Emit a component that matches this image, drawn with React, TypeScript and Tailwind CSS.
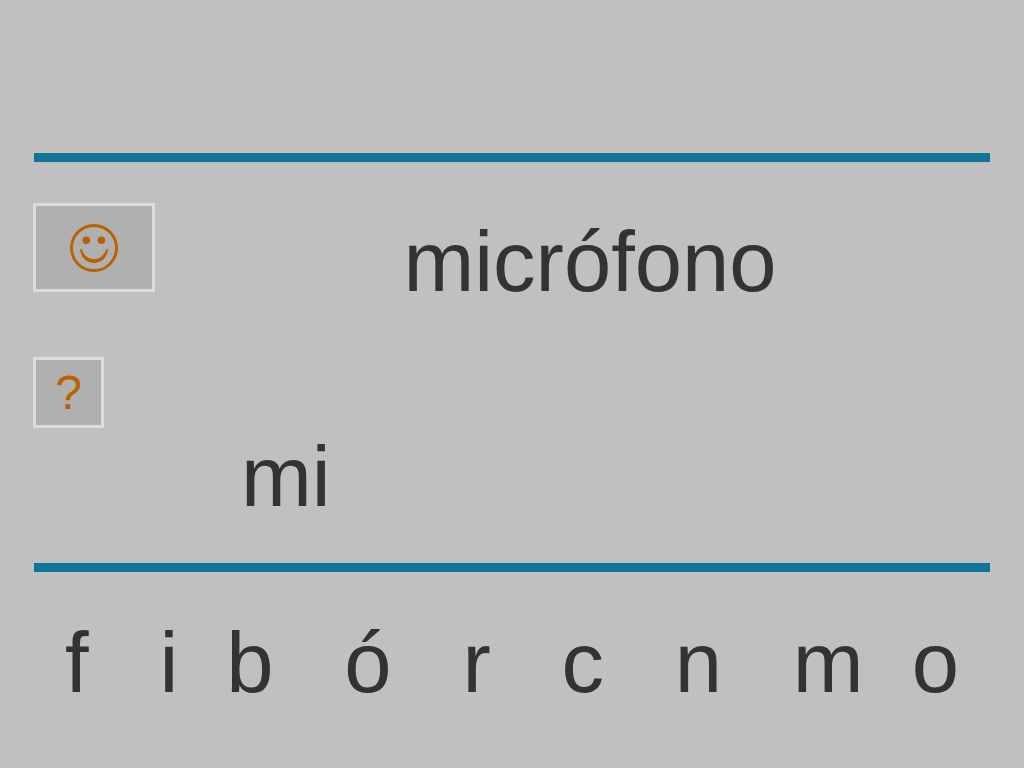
import React, { useState } from "react";

// letters of each group stand closer together than the groups do
const letterGroups = [["f"], ["i", "b"], ["ó"], ["r"], ["c"], ["n"], ["m", "o"]];

const SmileyIcon: React.FC = () => (
  <svg viewBox="0 0 48 48" className="w-12 h-12" fill="none" aria-hidden="true">
    <circle cx="24" cy="24" r="22.5" stroke="currentColor" strokeWidth="2.8" />
    <circle cx="16.3" cy="16.3" r="3.8" fill="currentColor" />
    <circle cx="31.4" cy="16.3" r="3.8" fill="currentColor" />
    <path
      d="M10 25.500C11 33.500 16.500 39 24 39S37 33.500 38 25.500L36.300 25C34.500 31 30 35.200 24 35.200S13.500 31 11.700 25Z"
      fill="currentColor"
    />
  </svg>
);

const Divider: React.FC = () => <hr className="mx-px h-[9px] border-0 bg-[#0f7599]" />;

const App: React.FC = () => {
  const word = "micrófono";
  const [typed, setTyped] = useState<string>("mi");
  const [showWord, setShowWord] = useState<boolean>(true);

  const addLetter = (letter: string) => {
    if (word.startsWith(typed + letter)) {
      setTyped(typed + letter);
    }
  };

  return (
    <main className="min-h-screen bg-[#c0c0c0] px-[33px] pt-[153px] font-['Liberation_Sans',Arial,sans-serif] text-[85px] leading-[98px] text-[#333333]">
      <Divider />

      <div className="mt-[41px] flex items-start gap-[34px]">
        <button
          type="button"
          aria-label="Empezar de nuevo"
          className="flex h-[89px] w-[122px] items-center justify-center border-3 border-[#dddddd] bg-[#b0b0b0] text-[#b96000]"
          onClick={() => setTyped("")}
        >
          <SmileyIcon />
        </button>
        <h1 className="mt-[10px] min-h-[98px] flex-1 text-center">{showWord && word}</h1>
      </div>

      <button
        type="button"
        className="mt-[46px] flex h-[71px] w-[71px] items-center justify-center border-3 border-[#dddddd] bg-[#b0b0b0] text-5xl text-[#b96000]"
        onClick={() => setShowWord(!showWord)}
      >
        ?
      </button>

      <p className="mb-[37px] ml-52 min-h-[98px]">{typed}</p>

      <Divider />

      <div className="mt-[42px] flex justify-between pr-8 pl-8">
        {letterGroups.map((group) => (
          <div key={group.join("")} className="flex gap-12">
            {group.map((letter) => (
              <button key={letter} type="button" onClick={() => addLetter(letter)}>
                {letter}
              </button>
            ))}
          </div>
        ))}
      </div>
    </main>
  );
};

export default App;
